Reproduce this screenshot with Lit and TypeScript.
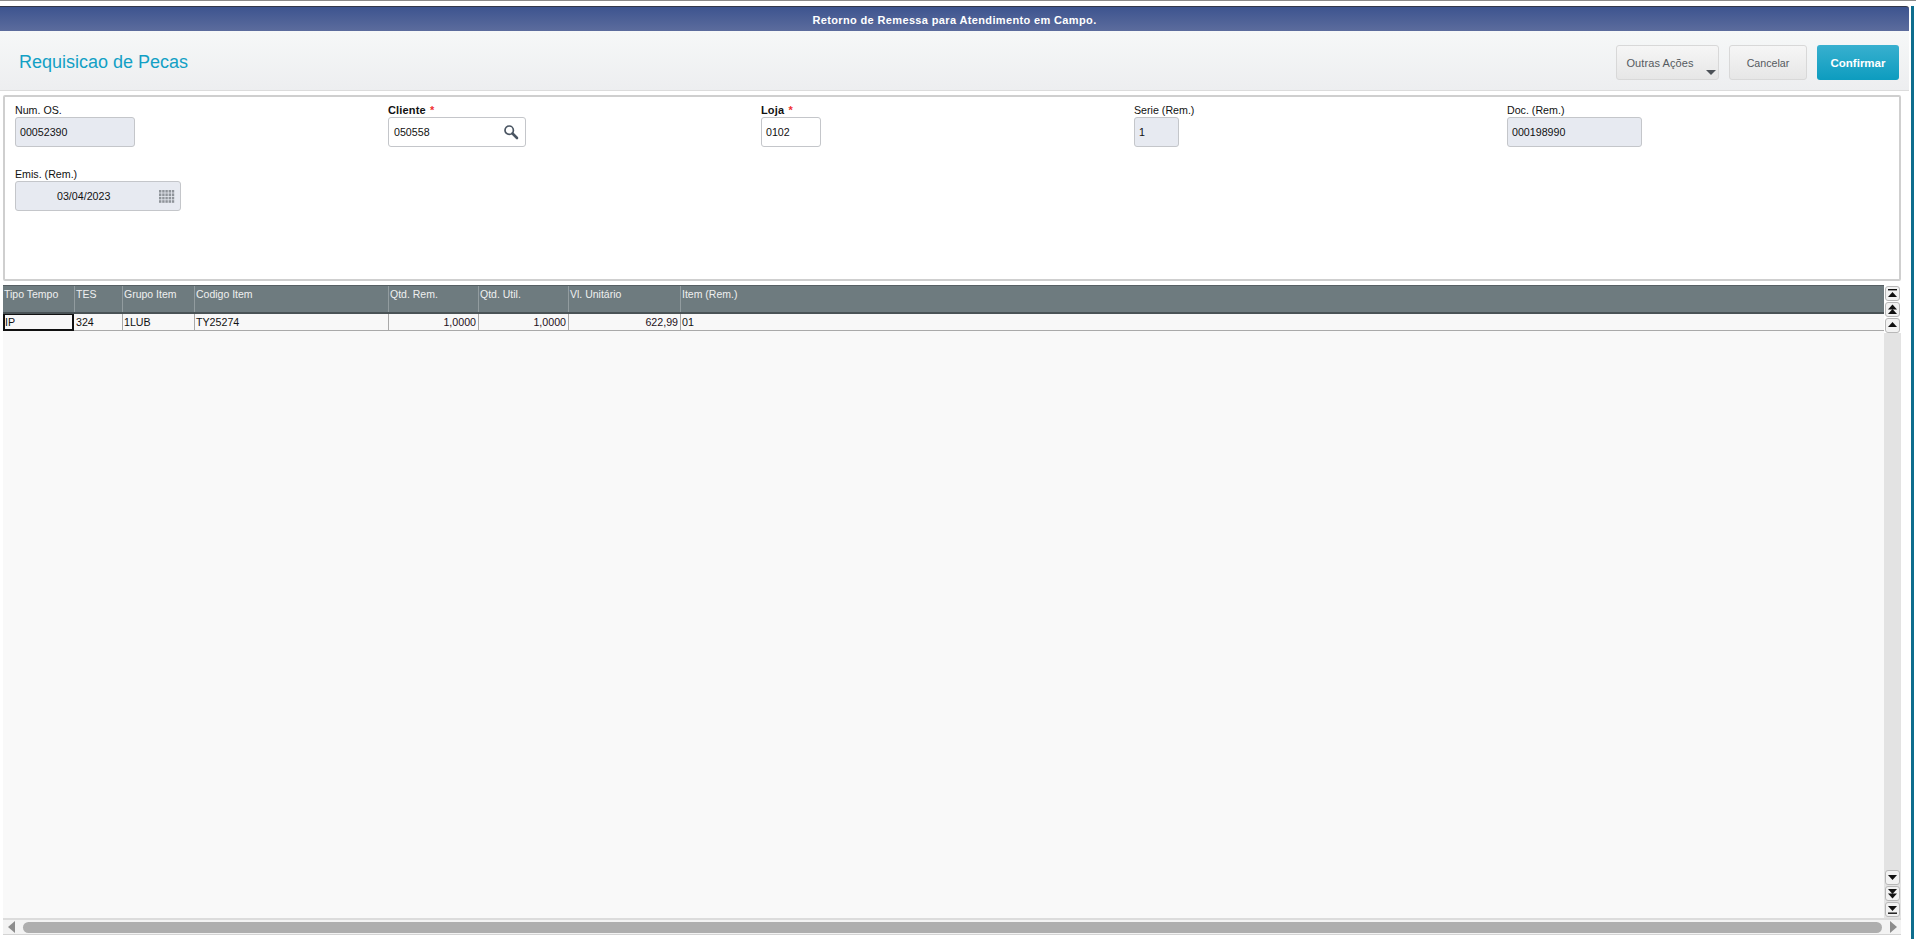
import { LitElement, html, css, svg } from "lit";
import { customElement } from "lit/decorators.js";

const up = (y: number) => svg`<path d="M3 ${y + 5}L7.5 ${y}L12 ${y + 5}Z"/>`;
const down = (y: number) => svg`<path d="M3 ${y}L7.5 ${y + 5}L12 ${y}Z"/>`;
const bar = (y: number) => svg`<rect x="3" y="${y}" width="9" height="1.4"/>`;
const btn = (parts: unknown) => html`<div class="sbtn"><svg width="15" height="15" viewBox="0 0 15 15">${parts}</svg></div>`;

const calDots: { x: number; y: number }[] = [];
for (let r = 0; r < 4; r++) for (let c = 0; c < 5; c++) calDots.push({ x: c * 3.2, y: r * 3.4 });

const headers = ["Tipo Tempo", "TES", "Grupo Item", "Codigo Item", "Qtd. Rem.", "Qtd. Util.", "Vl. Unitário", "Item (Rem.)"];
const cells: [string, boolean][] = [
  ["IP", false], ["324", false], ["1LUB", false], ["TY25274", false],
  ["1,0000", true], ["1,0000", true], ["622,99", true], ["01", false],
];

@customElement("app-root")
export class AppRoot extends LitElement {
  static styles = css`
    :host { display: block; width: 1916px; height: 939px; overflow: hidden; background: #fff;
      font-family: "Liberation Sans", Arial, sans-serif; font-size: 10.67px; color: #111; }
    .topline { height: 1px; background: #8a8a8a; margin-bottom: 5px; }
    .frame { display: flex; height: 933px; }
    .dialog { width: 1909px; display: flex; flex-direction: column; }
    .teal { width: 3px; margin-left: 2px; background: #0e6e8e; }
    .caption { height: 25px; box-sizing: border-box; border-top: 1px solid #33384a; border-top-right-radius: 3px;
      background: linear-gradient(#3d548f, #5c6c9d); color: #fff; font-weight: bold; font-size: 11px;
      display: flex; align-items: center; justify-content: center; letter-spacing: .36px; padding-top: 1px; }
    .actionbar { height: 60px; box-sizing: border-box; border-bottom: 1px solid #dcdcdc;
      background: linear-gradient(#f6f8f8, #edeef0); display: flex; align-items: center; padding: 4px 10px 0 19px; gap: 10px; }
    .title { flex: 1; font-size: 18px; color: #12a0c5; padding-bottom: 1px; }
    .btn { height: 35px; box-sizing: border-box; border: 1px solid #d8d8d8; border-radius: 3px; color: #555a60;
      background: linear-gradient(#f6f6f6, #e6e6e6); display: flex; align-items: center; justify-content: center;
      position: relative; }
    .more { width: 103px; padding-right: 15px; font-size: 11px; letter-spacing: .1px; }
    .more svg { position: absolute; right: 2px; bottom: 4px; }
    .cancel { width: 78px; }
    .ok { width: 82px; border: 0; color: #fff; font-weight: bold; font-size: 11.5px; background: linear-gradient(#38b0cf, #0d9cbf); }
    .form { margin: 4px 8px 4px 3px; height: 186px; box-sizing: border-box; border: 2px solid #cfcfcf; border-radius: 2px;
      padding: 6px 0 0 10px; display: grid; grid-template-columns: repeat(5, 373px); grid-auto-rows: 64px; align-items: start; }
    .field { display: flex; flex-direction: column; align-items: flex-start; }
    .lbl { height: 14px; line-height: 14px; font-size: 10.67px; }
    .lbl.req { font-weight: bold; color: #111; font-size: 11px; letter-spacing: .15px; }
    .req i { color: #f03030; font-style: normal; margin-left: 1px; }
    .input { height: 30px; box-sizing: border-box; border: 1px solid #c4c6ca; border-radius: 3px; background: #fff;
      display: flex; align-items: center; padding-left: 4px; position: relative; }
    .ro { background: #e7eaf1; }
    .w120 { width: 120px; } .w138 { width: 138px; padding-left: 5px; } .w60 { width: 60px; } .w45 { width: 45px; } .w135 { width: 135px; } .w166 { width: 166px; }
    .date { padding-left: 41px; }
    .input svg { position: absolute; }
    .lens { right: 6px; top: 6px; }
    .cal { right: 5px; top: 8px; }
    .data { flex: 1; margin: 0 8px 0 3px; display: flex; flex-direction: column; min-height: 0; }
    .upper { flex: 1; display: flex; min-height: 0; }
    .table { flex: 1; background: #f9f9f9; min-width: 0; }
    .cols { display: grid; grid-template-columns: 72px 48px 72px 194px 90px 90px 112px 1fr; }
    .head { height: 29px; box-sizing: border-box; background: #6e7b7f; border-top: 1px solid #565f63; border-bottom: 2px solid #4a5356; }
    .head div { color: #eef0f0; padding: 2px 0 0 1px; box-sizing: border-box; border-right: 1px solid #929c9f; line-height: 12px; font-size: 10.5px; }
    .head div:last-child { border-right: 0; }
    .row { height: 17px; box-sizing: border-box; border-bottom: 1px solid #a9a9a9; background: #f8f8f8; }
    .row div { box-sizing: border-box; padding: 0 2px 0 1px; border-right: 1px solid #a9a9a9; line-height: 16px; white-space: nowrap; }
    .row div:last-child { border-right: 0; }
    .row .num { text-align: right; color: #1d1020; padding-right: 2px; }
    .row .focus { border: 2px solid #111; border-top-width: 1px; line-height: 14px; padding-left: 0; margin-right: 1px; }
    .vs { width: 17px; display: flex; flex-direction: column; align-items: flex-start; }
    .sgroup { display: flex; flex-direction: column; gap: 1px; padding: 1px 0 0 1px; }
    .sgroup.end { background: #e3e3e3; width: 17px; box-sizing: border-box; padding: 0 0 1px 1px; }
    .track { flex: 1; width: 17px; background: #e3e3e3; }
    .sbtn { width: 15px; height: 15px; box-sizing: border-box; border: 1px solid #b8b8b8; border-radius: 3px; background: #f2f2f2; display: flex; align-items: center; justify-content: center; }
    .sbtn svg { flex: none; margin: -1px; display: block; fill: #111; }
    .hs { height: 17px; box-sizing: border-box; border-top: 2px solid #dcdcdc; border-bottom: 1px solid #d4d4d4; background: #f3f3f3;
      display: flex; align-items: center; padding: 0 4px 0 5px; gap: 7px; }
    .hs svg { flex: none; fill: #8d8d8d; }
    .thumb { flex: 1; height: 11px; border-radius: 6px; background: #aeaeae; }
    .bottom { height: 4px; }
  `;

  render() {
    return html`
      <div class="topline"></div>
      <div class="frame">
        <div class="dialog">
          <div class="caption">Retorno de Remessa para Atendimento em Campo.</div>
          <div class="actionbar">
            <div class="title">Requisicao de Pecas</div>
            <div class="btn more">Outras Ações
              <svg width="10" height="5" viewBox="0 0 10 5"><path d="M0 0H10L5 5Z" fill="#4d5258"/></svg>
            </div>
            <div class="btn cancel">Cancelar</div>
            <div class="btn ok">Confirmar</div>
          </div>
          <div class="form">
            <div class="field"><div class="lbl">Num. OS.</div><div class="input ro w120">00052390</div></div>
            <div class="field"><div class="lbl req">Cliente <i>*</i></div>
              <div class="input w138">050558
                <svg class="lens" width="16" height="16" viewBox="0 0 16 16" fill="none" stroke="#4a5562">
                  <circle cx="6.2" cy="6.2" r="4.2" stroke-width="1.7"/><path d="M9.5 9.5L14 14" stroke-width="2.6" stroke-linecap="round"/>
                </svg>
              </div></div>
            <div class="field"><div class="lbl req">Loja <i>*</i></div><div class="input w60">0102</div></div>
            <div class="field"><div class="lbl">Serie (Rem.)</div><div class="input ro w45">1</div></div>
            <div class="field"><div class="lbl">Doc. (Rem.)</div><div class="input ro w135">000198990</div></div>
            <div class="field"><div class="lbl">Emis. (Rem.)</div>
              <div class="input ro w166 date">03/04/2023
                <svg class="cal" width="16" height="13" viewBox="0 0 16 13">
                  ${calDots.map((d) => svg`<rect x="${d.x}" y="${d.y}" width="2.4" height="2.6" fill="#8f949a"/>`)}
                </svg>
              </div></div>
          </div>
          <div class="data">
            <div class="upper">
              <div class="table">
                <div class="cols head">${headers.map((h) => html`<div>${h}</div>`)}</div>
                <div class="cols row">
                  ${cells.map(([t, n], i) => html`<div class="${n ? "num" : i === 0 ? "focus" : ""}">${t}</div>`)}
                </div>
              </div>
              <div class="vs">
                <div class="sgroup">
                  ${btn(svg`${bar(3)}${up(6)}`)}
                  ${btn(svg`${up(2.5)}${up(7)}`)}
                  ${btn(up(4))}
                </div>
                <div class="track"></div>
                <div class="sgroup end">
                  ${btn(down(5))}
                  ${btn(svg`${down(3)}${down(7.5)}`)}
                  ${btn(svg`${down(4)}${bar(10.5)}`)}
                </div>
              </div>
            </div>
            <div class="hs">
              <svg width="8" height="12" viewBox="0 0 8 12"><path d="M7 0V12L0 6Z"/></svg>
              <div class="thumb"></div>
              <svg width="8" height="12" viewBox="0 0 8 12"><path d="M1 0V12L8 6Z"/></svg>
            </div>
          </div>
          <div class="bottom"></div>
        </div>
        <div class="teal"></div>
      </div>
    `;
  }
}
